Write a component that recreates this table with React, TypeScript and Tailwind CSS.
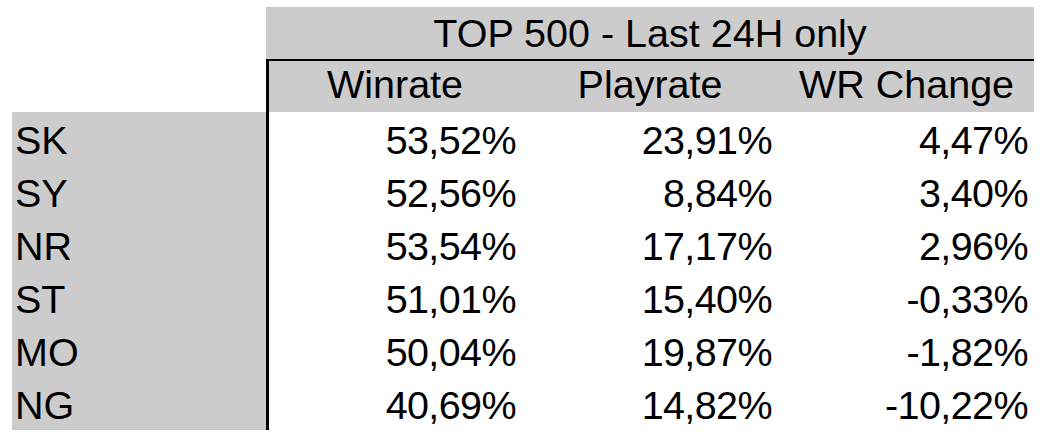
const rows = [
  { name: "SK", winrate: "53,52%", playrate: "23,91%", change: "4,47%" },
  { name: "SY", winrate: "52,56%", playrate: "8,84%", change: "3,40%" },
  { name: "NR", winrate: "53,54%", playrate: "17,17%", change: "2,96%" },
  { name: "ST", winrate: "51,01%", playrate: "15,40%", change: "-0,33%" },
  { name: "MO", winrate: "50,04%", playrate: "19,87%", change: "-1,82%" },
  { name: "NG", winrate: "40,69%", playrate: "14,82%", change: "-10,22%" },
];

export default function App() {
  return (
    <div
      className="w-[1043px] h-[439px] bg-white text-black text-[39.5px] leading-[46px] pt-[7px] pl-[12px] overflow-hidden"
      style={{ fontFamily: '"Liberation Sans", Arial, sans-serif' }}
    >
      {/* Title row */}
      <div className="flex">
        <div className="w-[254px]" />
        <div className="w-[768px] h-[54px] bg-[#cccccc] border-b-2 border-black pt-[3px] text-center">
          TOP 500 - Last 24H only
        </div>
      </div>

      {/* Column headers */}
      <div className="flex">
        <div className="w-[254px]" />
        <div className="flex w-[768px] h-[51px] bg-[#cccccc] border-l-[3px] border-black">
          <div className="w-[252px] text-center">Winrate</div>
          <div className="w-[258px] text-center">Playrate</div>
          <div className="w-[255px] text-center">WR Change</div>
        </div>
      </div>

      {/* Data rows */}
      {rows.map((row) => (
        <div key={row.name} className="flex">
          <div className="w-[254px] h-[53px] bg-[#cccccc] pl-[3px] pt-[5px]">{row.name}</div>
          <div className="flex w-[768px] h-[53px] border-l-[3px] border-black pt-[5px] tracking-[-0.6px]">
            <div className="w-[252px] pr-[5px] text-right">{row.winrate}</div>
            <div className="w-[258px] pr-[7px] text-right">{row.playrate}</div>
            <div className="w-[255px] pr-[6px] text-right">{row.change}</div>
          </div>
        </div>
      ))}
    </div>
  );
}
